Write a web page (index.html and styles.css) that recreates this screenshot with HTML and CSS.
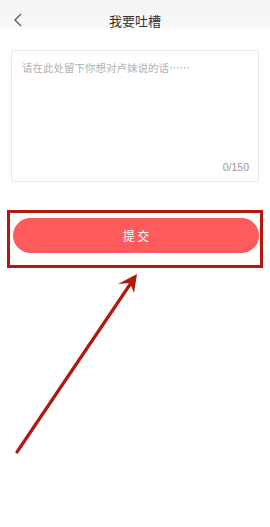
FILE: index.html
```html
<!DOCTYPE html>
<html lang="zh">
<head>
<meta charset="utf-8">
<link rel="stylesheet" href="styles.css">
</head>
<body>
<div class="page">
  <header class="topbar">
    <svg class="back" width="10" height="14" viewBox="0 0 10 14"><path d="M8 1 L2 7 L8 13" fill="none" stroke="#555" stroke-width="1.3"/></svg>
    <div class="title">我要吐槽</div>
  </header>
  <div class="box">
    <div class="placeholder">请在此处留下你想对卢妹说的话……</div>
    <div class="count">0/150</div>
  </div>
  <button class="submit">提&nbsp;交</button>
  <svg class="overlay" width="270" height="527" viewBox="0 0 270 527">
    <rect x="8.5" y="211.5" width="253" height="55" fill="none" stroke="#b3180e" stroke-width="3"/>
    <line x1="17" y1="452" x2="133" y2="280" stroke="#b3180e" stroke-width="3.2" stroke-linecap="round"/>
    <path d="M137 274 L118 284 L130 283 L134 293 Z" fill="#b3180e"/>
  </svg>
</div>
</body>
</html>
```
FILE: styles.css
```css
* { box-sizing: border-box; }
html, body { margin: 0; padding: 0; background: #fff; }
body { font-family: "Noto Sans CJK SC", "Liberation Sans", sans-serif; }
.page { position: relative; width: 270px; height: 527px; overflow: hidden; }
.topbar {
  position: relative;
  height: 40px;
  background: linear-gradient(#f3f3f3 0, #f8f8f8 26px, #fff 29px);
  display: flex;
  align-items: center;
  justify-content: center;
}
.back { position: absolute; left: 13px; top: 13px; }
.title { font-size: 13px; color: #333; }
.box {
  margin: 10px 11px 0 11px;
  height: 132px;
  border: 1px solid #e8e8e8;
  border-radius: 3px;
  display: flex;
  flex-direction: column;
  justify-content: space-between;
  padding: 9px 9px 7px 10px;
}
.placeholder { font-size: 10.5px; color: #b0b0b0; line-height: 16px; }
.count {
  align-self: flex-end;
  font-family: "Liberation Sans", sans-serif;
  font-size: 10.5px;
  color: #999;
  line-height: 14px;
}
.submit {
  display: block;
  margin: 36px 11px 0 13px;
  width: 246px;
  height: 35px;
  border: 0;
  border-radius: 18px;
  background: #ff5a5c;
  color: #fff;
  font-family: inherit;
  font-size: 12px;
  padding: 0;
}
.overlay { position: absolute; left: 0; top: 0; pointer-events: none; }
```
